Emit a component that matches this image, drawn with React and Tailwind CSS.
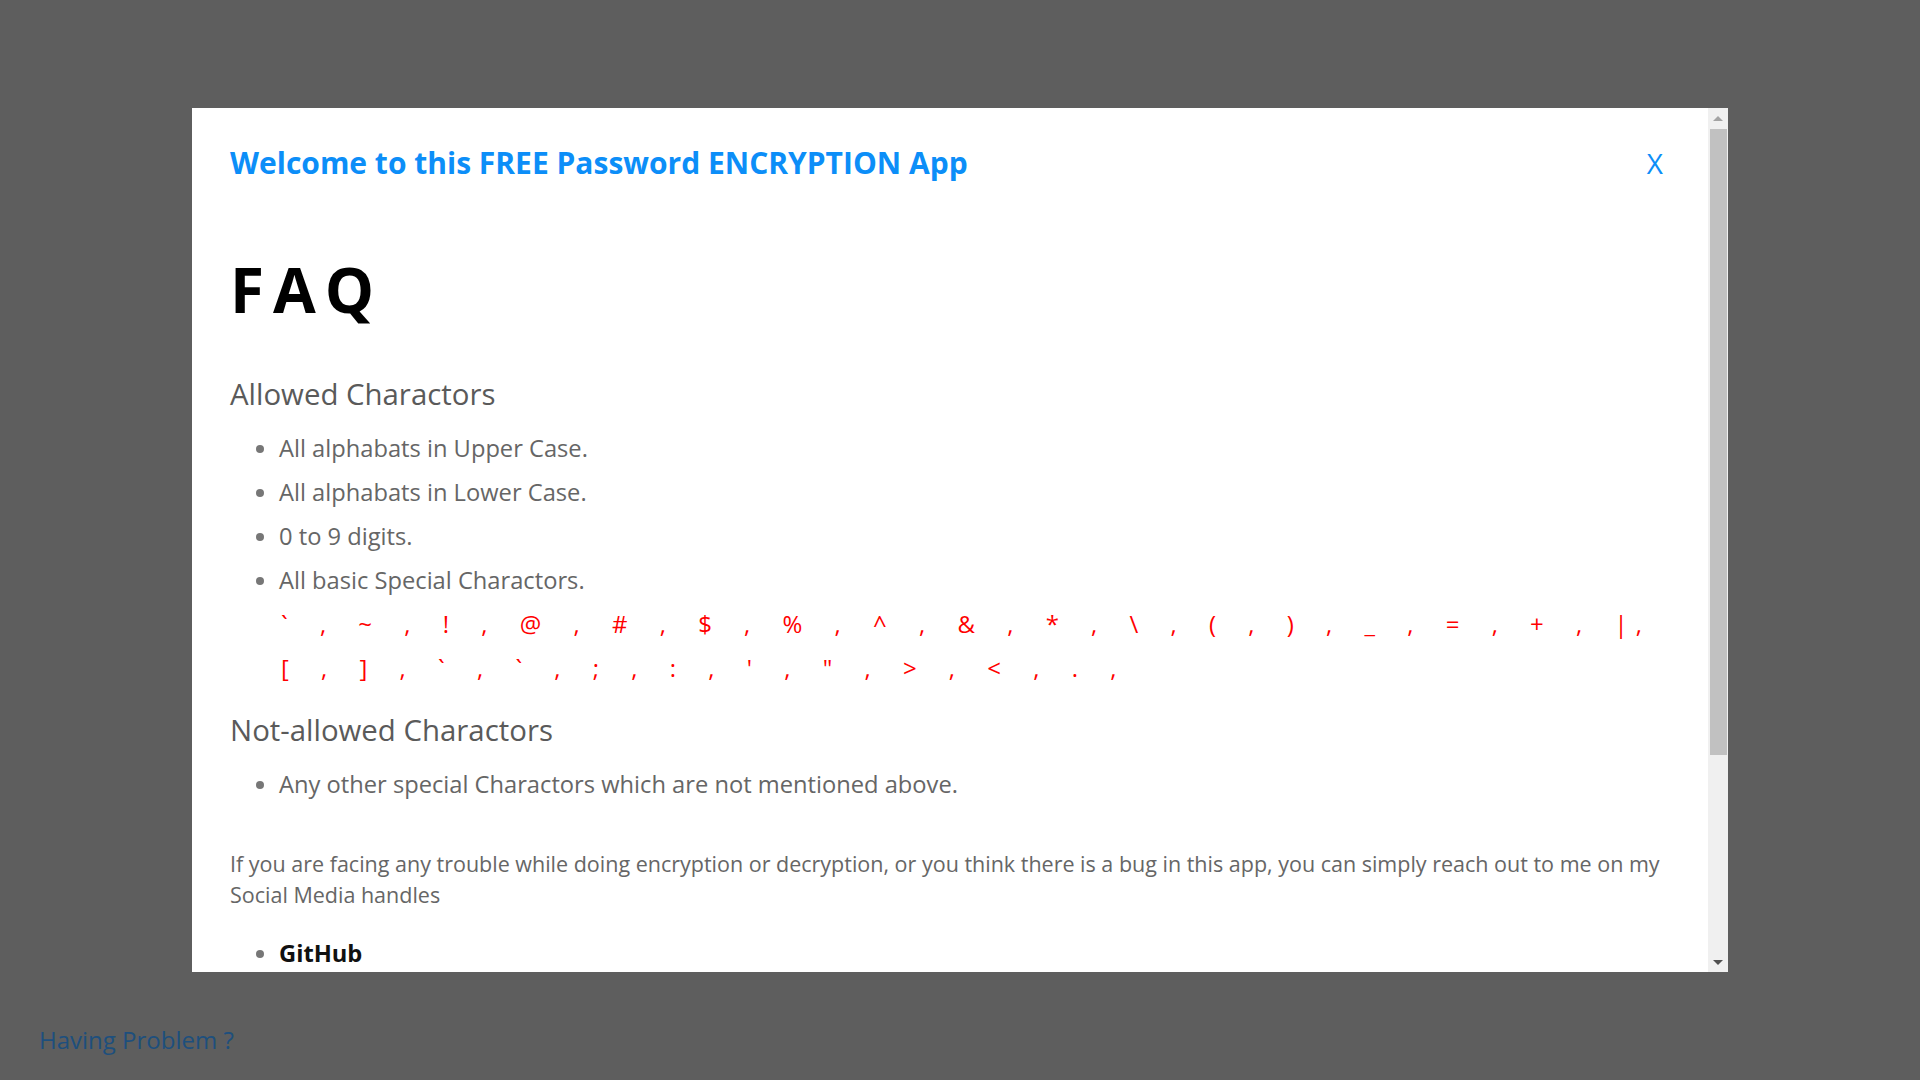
import React from 'react';

const allowed = [
  'All alphabats in Upper Case.',
  'All alphabats in Lower Case.',
  '0 to 9 digits.',
  'All basic Special Charactors.',
];

const App = () => {
  return (
    <div className="relative h-screen w-full overflow-hidden bg-[#5e5e5e] font-['Open_Sans','Noto_Sans',sans-serif]">
      {/* page behind the overlay */}
      <div className="flex h-full flex-col justify-end px-[39px] pb-[24px]">
        <a href="#" className="w-fit text-[24px] leading-[32px] text-[#1d4f7d]">
          Having Problem ?
        </a>
      </div>

      {/* FAQ modal */}
      <div className="absolute left-[10%] top-[10%] flex h-[80%] w-[80%] bg-white">
        <div className="min-w-0 flex-1 overflow-hidden">
          <div className="pl-[38px] pr-[18px] pt-[35px]">
            <div className="flex items-center justify-between">
              <h2 className="text-[30px] font-bold leading-[40px] text-[#0c8ef8]">
                Welcome to this FREE Password ENCRYPTION App
              </h2>
              <button className="mr-[27px] text-[28px] leading-[40px] text-[#0c8ef8]">X</button>
            </div>

            <h1 className="mt-[66px] text-[62px] font-bold leading-[80px] tracking-[9px] text-black">
              FAQ
            </h1>

            <h3 className="mt-[47px] text-[29.4px] font-normal leading-[36px] text-[#5a5a5a]">
              Allowed Charactors
            </h3>
            <ul className="mt-[14px] list-disc pl-[49px] text-[23.7px] leading-[44px] text-[#666] marker:text-[#777]">
              {allowed.map((item) => (
                <li key={item}>{item}</li>
              ))}
            </ul>
            <p className="pl-[51px] text-[24px] leading-[44px] tracking-[8px] [word-spacing:10px] text-[#ff0000]">
              {'` , ~ , ! , @ , # , $ , % , ^ , & , * , \\ , ( , ) , _ , = , + , |,'}
              <br />
              {'[ , ] , ` , ` , ; , : , \' , " , > , < , . ,'}
            </p>

            <h3 className="mt-[22px] text-[29.4px] font-normal leading-[36px] text-[#5a5a5a]">
              Not-allowed Charactors
            </h3>
            <ul className="mt-[14px] list-disc pl-[49px] text-[23.7px] leading-[44px] text-[#666] marker:text-[#777]">
              <li>Any other special Charactors which are not mentioned above.</li>
            </ul>

            <p className="mt-[42px] text-[21.5px] leading-[31px] text-[#666]">
              If you are facing any trouble while doing encryption or decryption, or you think there is a bug in this app, you can simply reach out to me on my Social Media handles
            </p>
            <ul className="mt-[25px] list-disc pl-[49px] text-[23.7px] leading-[36px] text-[#777]">
              <li>
                <a href="#" className="font-bold text-[#111]">GitHub</a>
              </li>
            </ul>
          </div>
        </div>

        {/* scrollbar */}
        <div className="flex w-[20px] shrink-0 flex-col bg-[#f0f0f0]">
          <div className="flex h-[20px] items-center justify-center">
            <div className="h-0 w-0 border-x-[5px] border-b-[5px] border-x-transparent border-b-[#a3a3a3]" />
          </div>
          <div className="flex-1">
            <div className="ml-[2px] mr-[1px] mt-[1px] h-[626px] bg-[#c1c1c1]" />
          </div>
          <div className="flex h-[20px] items-center justify-center">
            <div className="h-0 w-0 border-x-[5px] border-t-[5px] border-x-transparent border-t-[#505050]" />
          </div>
        </div>
      </div>
    </div>
  );
};

export default App;
